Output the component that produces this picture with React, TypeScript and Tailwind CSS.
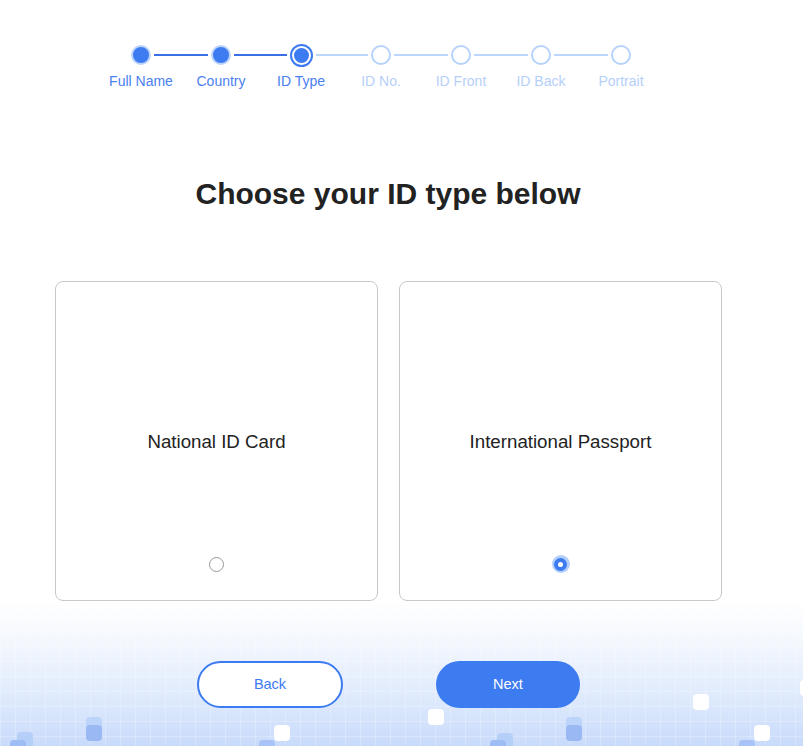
import { useState } from "react";

const steps = ["Full Name", "Country", "ID Type", "ID No.", "ID Front", "ID Back", "Portrait"];
const current = 2;

// decorative tiles in the bottom backdrop (x, y relative to the section)
const tiles = [
  { x: 17, y: 131, c: "bg-[#b6cff9]" },
  { x: 10, y: 139, c: "bg-[#9ebdf5]" },
  { x: 86, y: 116, c: "bg-[#bcd3fa]" },
  { x: 86, y: 124, c: "bg-[#9ab9f4]" },
  { x: 274, y: 124, c: "bg-white" },
  { x: 259, y: 139, c: "bg-[#a8c4f6]" },
  { x: 428, y: 108, c: "bg-white" },
  { x: 497, y: 132, c: "bg-[#b6cff9]" },
  { x: 490, y: 139, c: "bg-[#9ebdf5]" },
  { x: 566, y: 116, c: "bg-[#bcd3fa]" },
  { x: 566, y: 124, c: "bg-[#9ab9f4]" },
  { x: 693, y: 93, c: "bg-white" },
  { x: 754, y: 124, c: "bg-white" },
  { x: 739, y: 139, c: "bg-[#a8c4f6]" },
  { x: 800, y: 79, c: "bg-white" },
];

const StepDot = ({ index }: { index: number }) => {
  if (index < current) {
    return <div className="w-[20px] h-[20px] rounded-full bg-[#3d7bf0] border-[2px] border-[#bcd4fa]" />;
  }
  if (index === current) {
    return (
      <div className="w-[23px] h-[23px] rounded-full border-[2px] border-[#3d7bf0] bg-white p-[2px]">
        <div className="w-full h-full rounded-full bg-[#3d7bf0]" />
      </div>
    );
  }
  return <div className="w-[20px] h-[20px] rounded-full border-[2px] border-[#b7d3fb] bg-white" />;
};

const App = () => {
  const [choice, setChoice] = useState("passport");

  const options = [
    { id: "national", label: "National ID Card" },
    { id: "passport", label: "International Passport" },
  ];

  return (
    <div className="w-full h-[746px] overflow-hidden bg-white font-['Liberation_Sans',Arial,sans-serif] text-[#222]">
      <div className="w-[776px]">
        {/* Stepper */}
        <div className="flex pl-[101px] pt-[43px]">
          {steps.map((step, i) => (
            <div key={step} className="w-[80px] flex flex-col items-center">
              <div className="w-full h-[24px] flex items-center">
                <div
                  className={`flex-1 h-[2px] mr-[3px] ${
                    i === 0 ? "bg-transparent" : i <= current ? "bg-[#3a70e6]" : "bg-[#bcd6fb]"
                  }`}
                />
                <StepDot index={i} />
                <div
                  className={`flex-1 h-[2px] ml-[3px] ${
                    i === steps.length - 1 ? "bg-transparent" : i < current ? "bg-[#3a70e6]" : "bg-[#bcd6fb]"
                  }`}
                />
              </div>
              <span
                className={`mt-[4px] text-[14px] leading-[20px] whitespace-nowrap ${
                  i <= current ? "text-[#4a80f0]" : "text-[#b5cffa]"
                }`}
              >
                {step}
              </span>
            </div>
          ))}
        </div>

        {/* Title */}
        <h1 className="mt-[85px] text-center text-[30px] leading-[36px] font-bold text-[#222]">
          Choose your ID type below
        </h1>

        {/* Options */}
        <div className="mt-[69px] pl-[55px] flex gap-[21px]">
          {options.map((opt) => {
            const selected = choice === opt.id;
            return (
              <button
                key={opt.id}
                onClick={() => setChoice(opt.id)}
                className="w-[323px] h-[320px] border border-[#c8c8c8] rounded-[8px] bg-white flex flex-col items-center pt-[149px]"
              >
                <span className="text-[18.7px] leading-[22px] text-[#222]">{opt.label}</span>
                {selected ? (
                  <span className="mt-[102px] w-[18px] h-[18px] rounded-full bg-[#b3cffb] flex items-center justify-center">
                    <span className="w-[13px] h-[13px] rounded-full bg-[#3d7bf0] flex items-center justify-center">
                      <span className="w-[5px] h-[5px] rounded-full bg-white" />
                    </span>
                  </span>
                ) : (
                  <span className="mt-[104px] w-[15px] h-[15px] rounded-full border border-[#9a9a9a] bg-white" />
                )}
              </button>
            );
          })}
        </div>
      </div>

      {/* Bottom actions with backdrop */}
      <div className="relative h-[145px] bg-[linear-gradient(to_bottom,#ffffff_0px,#f4f8fe_40px,#dfeafc_95px,#c9dbfb_145px)]">
        <div className="absolute inset-0 bg-[linear-gradient(to_right,rgba(255,255,255,0.22)_1px,transparent_1px),linear-gradient(to_bottom,rgba(255,255,255,0.22)_1px,transparent_1px)] bg-[size:15px_15px]" />
        {tiles.map((t, i) => (
          <div
            key={i}
            className={`absolute w-[16px] h-[16px] rounded-[4px] ${t.c}`}
            style={{ left: t.x, top: t.y }}
          />
        ))}
        <div className="relative w-[776px] pt-[60px] pl-[197px] flex gap-[93px]">
          <button className="w-[146px] h-[47px] rounded-full border-[2px] border-[#3d7bf0] bg-white text-[#3d7bf0] text-[14.5px]">
            Back
          </button>
          <button className="w-[144px] h-[47px] rounded-full bg-[#3d7bf0] text-white text-[14.5px]">
            Next
          </button>
        </div>
      </div>
    </div>
  );
};

export default App;
